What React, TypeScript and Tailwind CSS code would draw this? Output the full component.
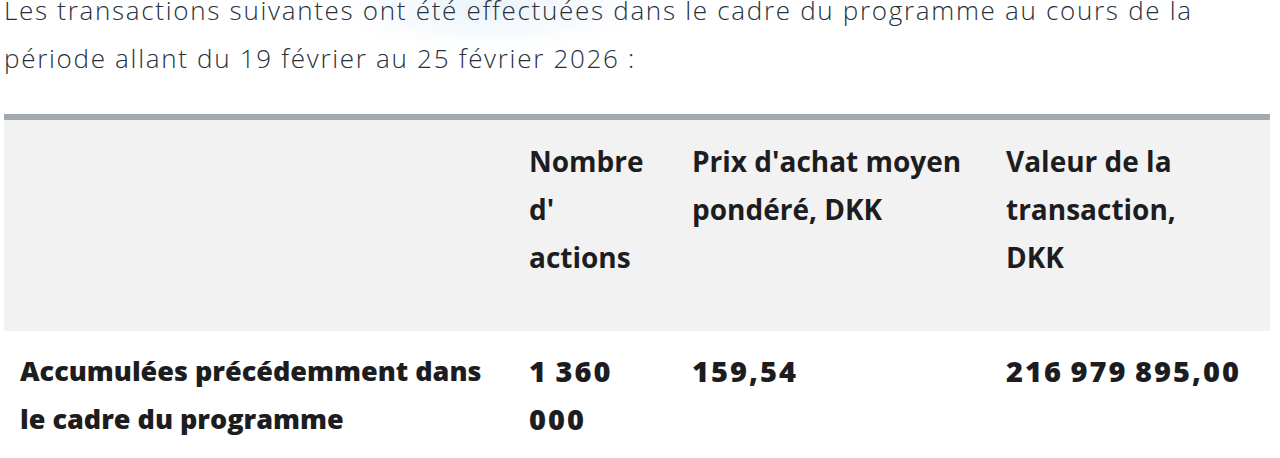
import React from 'react'

const headers = [
  '',
  "Nombre d' actions",
  "Prix d'achat moyen pondéré, DKK",
  'Valeur de la transaction, DKK',
]

const rows = [
  ['Accumulées précédemment dans le cadre du programme', '1 360 000', '159,54', '216 979 895,00'],
]

const colWidths = ['w-[509px]', 'w-[163px]', 'w-[314px]', 'w-[280px]']

export default function App() {
  return (
    <div
      className="relative h-[458px] overflow-hidden bg-white pl-[4px] pr-[10px]"
      style={{ fontFamily: '"Open Sans", sans-serif' }}
    >
      {/* faint glow behind the intro text */}
      <div className="pointer-events-none absolute left-[330px] top-[-40px] h-[90px] w-[320px] rounded-full bg-[radial-gradient(closest-side,#eaf3fa,transparent)]" />

      <p className="relative -mt-[14px] text-[26px] font-light leading-[48px] tracking-[1.7px] text-[#27303d]">
        Les transactions suivantes ont été effectuées dans le cadre du programme au cours de la
        période allant du 19 février au 25 février 2026 :
      </p>

      <table className="relative mt-[32px] w-[1266px] table-fixed border-collapse font-extrabold leading-[48px] text-[#1d1d1f]">
        <thead>
          <tr className="border-t-[6px] border-[#a3a9b1] bg-[#f2f2f2] text-[28px]">
            {headers.map((h, i) => (
              <th
                key={i}
                className={`${colWidths[i]} pl-4 ${i === 3 ? 'pr-10' : 'pr-4'} pt-[17px] pb-[50px] text-left align-top`}
              >
                {h}
              </th>
            ))}
          </tr>
        </thead>
        <tbody>
          {rows.map((row, r) => (
            <tr key={r}>
              {row.map((cell, i) => (
                <td
                  key={i}
                  className={`px-4 pt-4 pb-4 text-left align-top ${
                    i > 0 ? 'text-[29px] tracking-[2px] [word-spacing:-2px]' : 'text-[27px]'
                  } ${i === 1 ? 'pr-6' : ''}`}
                >
                  {cell}
                </td>
              ))}
            </tr>
          ))}
        </tbody>
      </table>
    </div>
  )
}
